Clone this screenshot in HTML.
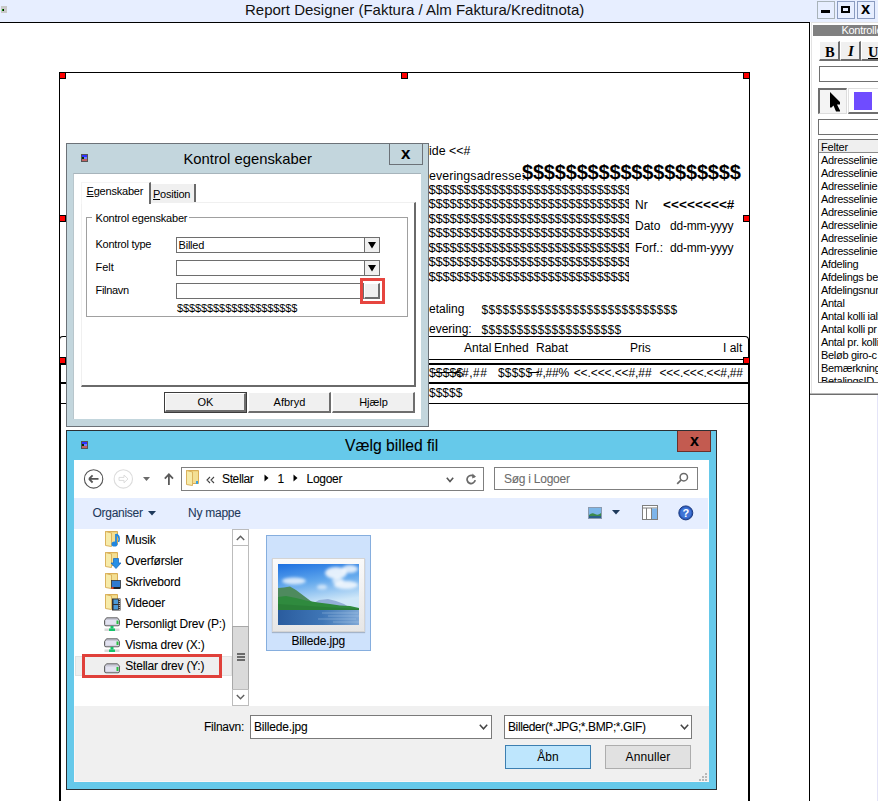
<!DOCTYPE html><html><head><meta charset="utf-8"><style>
html,body{margin:0;padding:0;width:878px;height:801px;overflow:hidden;background:#fff;position:relative;font-family:"Liberation Sans",sans-serif}
div,span,svg{position:absolute;box-sizing:border-box}
.t{-webkit-text-stroke:0.08px currentColor}
.r{position:relative}
</style></head><body>
<div style="left:0px;top:0px;width:878px;height:22px;background:#e7eeff"></div>
<div style="left:0px;top:22px;width:810px;height:1px;background:#000"></div>
<div style="left:809px;top:22px;width:1px;height:779px;background:#000"></div>
<div style="left:1px;top:6px;width:6px;height:7px;background:#c8c8c8"></div>
<div style="left:2px;top:9px;width:1px;height:2px;background:#0a0"></div>
<div style="left:3px;top:9px;width:1px;height:2px;background:#000"></div>
<div style="left:245px;top:2.40px;font-family:'Liberation Sans',sans-serif;font-size:15px;line-height:15px;white-space:pre;color:#111">Report Designer (Faktura / Alm Faktura/Kreditnota)</div>
<div style="left:817px;top:1px;width:18px;height:18px;background:#e7eeff;border:1px solid #a9b3b9"></div>
<div style="left:837px;top:1px;width:18px;height:18px;background:#e7eeff;border:1px solid #8a9bc0"></div>
<div style="left:857px;top:1px;width:18px;height:18px;background:#e7eeff;border:1px solid #8a9bc0"></div>
<div style="left:821px;top:10px;width:9px;height:3px;background:#000"></div>
<div style="left:841px;top:6px;width:9px;height:7px;border:2px solid #000;border-top-width:2px"></div>
<div style="left:861px;top:0.03px;font-family:'Liberation Sans',sans-serif;font-size:16.5px;line-height:16.5px;white-space:pre;font-weight:bold;color:#000">x</div>
<div style="left:810px;top:23px;width:68px;height:371px;background:#fff"></div>
<div style="left:811px;top:22px;width:67px;height:1px;background:#e3e3e3"></div>
<div style="left:811px;top:22px;width:1px;height:372px;background:#e3e3e3"></div>
<div style="left:813px;top:25px;width:65px;height:11px;background:#808080"></div>
<div style="left:841.5px;top:25.49px;font-family:'Liberation Sans',sans-serif;font-size:11px;line-height:11px;white-space:pre;color:#fff;letter-spacing:-0.3px">Kontrolle</div>
<div style="left:810px;top:393px;width:68px;height:1px;background:#b8b8b8"></div>
<div style="left:810px;top:394px;width:68px;height:1px;background:#6e6e6e"></div>
<div style="left:819px;top:41px;width:21px;height:20px;background:#f0f0f0;border-top:1px solid #fff;border-left:1px solid #fff;border-right:2px solid #6e6e6e;border-bottom:2px solid #6e6e6e"></div>
<div style="left:825px;top:44.53px;font-family:'Liberation Serif',sans-serif;font-size:14.5px;line-height:14.5px;white-space:pre;font-weight:bold;color:#000">B</div>
<div style="left:840px;top:41px;width:21px;height:20px;background:#f0f0f0;border-top:1px solid #fff;border-left:1px solid #fff;border-right:2px solid #6e6e6e;border-bottom:2px solid #6e6e6e"></div>
<div style="left:848px;top:44.10px;font-family:'Liberation Serif',sans-serif;font-size:15px;line-height:15px;white-space:pre;font-weight:bold;font-style:italic;color:#000">I</div>
<div style="left:861px;top:41px;width:21px;height:20px;background:#f0f0f0;border-top:1px solid #fff;border-left:1px solid #fff;border-right:2px solid #6e6e6e;border-bottom:2px solid #6e6e6e"></div>
<div style="left:868px;top:44.53px;font-family:'Liberation Serif',sans-serif;font-size:14.5px;line-height:14.5px;white-space:pre;font-weight:bold;text-decoration:underline;color:#000">U</div>
<div style="left:819px;top:66px;width:59px;height:16px;background:#fff;border:1px solid #707070;border-right:none"></div>
<div style="left:818px;top:88px;width:29px;height:26px;background:#f4f4f4;border-top:2px solid #6e6e6e;border-left:2px solid #6e6e6e;border-right:1px solid #ddd;border-bottom:1px solid #ddd"></div>
<svg style="left:829px;top:91px" width="13" height="22" viewBox="0 0 13 22"><path d="M1 1 L11 11 L11 13.5 L8 13.5 L11 19.5 L11 20.5 L7 20.5 L4.5 14.5 L2.5 16.5 L1 16.5 Z" fill="#000"/></svg>
<div style="left:848px;top:88px;width:30px;height:26px;background:#fff;border-top:1px solid #e0e0e0;border-left:1px solid #e0e0e0;border-bottom:2px solid #6e6e6e"></div>
<div style="left:854px;top:92px;width:18px;height:18px;background:#6f4cff"></div>
<div style="left:818px;top:119px;width:60px;height:16px;background:#fff;border:1px solid #707070;border-right:none"></div>
<div style="left:818px;top:139px;width:60px;height:244px;background:#fff;border:1px solid #707070;border-right:none;overflow:hidden"></div>
<div style="left:819px;top:140px;width:59px;height:12px;background:#efefef"></div>
<div style="left:819px;top:152px;width:59px;height:1px;background:#8a8a8a"></div>
<div style="left:821px;top:142.19px;font-family:'Liberation Sans',sans-serif;font-size:11px;line-height:11px;white-space:pre;color:#000;letter-spacing:-0.2px">Felter</div>
<div style="left:819px;top:139px;width:59px;height:243px;overflow:hidden"><div style="left:2px;top:16.29px;font-size:11px;line-height:11px;letter-spacing:-0.3px;white-space:pre;color:#000">Adresselinie</div><div style="left:2px;top:29.29px;font-size:11px;line-height:11px;letter-spacing:-0.3px;white-space:pre;color:#000">Adresselinie</div><div style="left:2px;top:42.29px;font-size:11px;line-height:11px;letter-spacing:-0.3px;white-space:pre;color:#000">Adresselinie</div><div style="left:2px;top:55.29px;font-size:11px;line-height:11px;letter-spacing:-0.3px;white-space:pre;color:#000">Adresselinie</div><div style="left:2px;top:68.29px;font-size:11px;line-height:11px;letter-spacing:-0.3px;white-space:pre;color:#000">Adresselinie</div><div style="left:2px;top:81.29px;font-size:11px;line-height:11px;letter-spacing:-0.3px;white-space:pre;color:#000">Adresselinie</div><div style="left:2px;top:94.29px;font-size:11px;line-height:11px;letter-spacing:-0.3px;white-space:pre;color:#000">Adresselinie</div><div style="left:2px;top:107.29px;font-size:11px;line-height:11px;letter-spacing:-0.3px;white-space:pre;color:#000">Adresselinie</div><div style="left:2px;top:120.29px;font-size:11px;line-height:11px;letter-spacing:-0.3px;white-space:pre;color:#000">Afdeling</div><div style="left:2px;top:133.29px;font-size:11px;line-height:11px;letter-spacing:-0.3px;white-space:pre;color:#000">Afdelings be</div><div style="left:2px;top:146.29px;font-size:11px;line-height:11px;letter-spacing:-0.3px;white-space:pre;color:#000">Afdelingsnummer</div><div style="left:2px;top:159.29px;font-size:11px;line-height:11px;letter-spacing:-0.3px;white-space:pre;color:#000">Antal</div><div style="left:2px;top:172.29px;font-size:11px;line-height:11px;letter-spacing:-0.3px;white-space:pre;color:#000">Antal kolli ialt</div><div style="left:2px;top:185.29px;font-size:11px;line-height:11px;letter-spacing:-0.3px;white-space:pre;color:#000">Antal kolli pr</div><div style="left:2px;top:198.29px;font-size:11px;line-height:11px;letter-spacing:-0.3px;white-space:pre;color:#000">Antal pr. kolli</div><div style="left:2px;top:211.29px;font-size:11px;line-height:11px;letter-spacing:-0.3px;white-space:pre;color:#000">Beløb giro-c</div><div style="left:2px;top:224.29px;font-size:11px;line-height:11px;letter-spacing:-0.3px;white-space:pre;color:#000">Bemærkning</div><div style="left:2px;top:237.29px;font-size:11px;line-height:11px;letter-spacing:-0.3px;white-space:pre;color:#000">BetalingsID</div></div>
<div style="left:877px;top:395px;width:1px;height:406px;background:#e4e4f8"></div>
<div style="left:59px;top:72px;width:691px;height:1px;background:#000"></div>
<div style="left:59px;top:72px;width:1px;height:729px;background:#000"></div>
<div style="left:749px;top:72px;width:1px;height:729px;background:#000"></div>
<div style="left:429px;top:144.60px;font-family:'Liberation Sans',sans-serif;font-size:12.4px;line-height:12.4px;white-space:pre;color:#000">ide &lt;&lt;#</div>
<div style="left:429px;top:169.90px;font-family:'Liberation Sans',sans-serif;font-size:12.4px;line-height:12.4px;white-space:pre;color:#000;letter-spacing:0.1px">everingsadresse:</div>
<div style="left:522px;top:162.17px;font-family:'Liberation Sans',sans-serif;font-size:20px;line-height:20px;white-space:pre;color:#000;font-weight:bold;letter-spacing:-0.19px">$$$$$$$$$$$$$$$$$$$$</div>
<div style="left:429px;top:183px;width:200px;height:14px;overflow:hidden"><div style="left:-0.5px;top:0;font-size:13px;line-height:13px;letter-spacing:-0.23px;white-space:pre;color:#000">$$$$$$$$$$$$$$$$$$$$$$$$$$$$$$</div></div>
<div style="left:429px;top:197px;width:200px;height:14px;overflow:hidden"><div style="left:-0.5px;top:0;font-size:13px;line-height:13px;letter-spacing:-0.23px;white-space:pre;color:#000">$$$$$$$$$$$$$$$$$$$$$$$$$$$$$$</div></div>
<div style="left:429px;top:212px;width:200px;height:14px;overflow:hidden"><div style="left:-0.5px;top:0;font-size:13px;line-height:13px;letter-spacing:-0.23px;white-space:pre;color:#000">$$$$$$$$$$$$$$$$$$$$$$$$$$$$$$</div></div>
<div style="left:429px;top:226px;width:200px;height:14px;overflow:hidden"><div style="left:-0.5px;top:0;font-size:13px;line-height:13px;letter-spacing:-0.23px;white-space:pre;color:#000">$$$$$$$$$$$$$$$$$$$$$$$$$$$$$$</div></div>
<div style="left:429px;top:241px;width:200px;height:14px;overflow:hidden"><div style="left:-0.5px;top:0;font-size:13px;line-height:13px;letter-spacing:-0.23px;white-space:pre;color:#000">$$$$$$$$$$$$$$$$$$$$$$$$$$$$$$</div></div>
<div style="left:429px;top:255px;width:200px;height:14px;overflow:hidden"><div style="left:-0.5px;top:0;font-size:13px;line-height:13px;letter-spacing:-0.23px;white-space:pre;color:#000">$$$$$$$$$$$$$$$$$$$$$$$$$$$$$$</div></div>
<div style="left:429px;top:270px;width:200px;height:14px;overflow:hidden"><div style="left:-0.5px;top:0;font-size:13px;line-height:13px;letter-spacing:-0.23px;white-space:pre;color:#000">$$$$$$$$$$$$$$$$$$$$$$$$$$$$$$</div></div>
<div style="left:635px;top:199.34px;font-family:'Liberation Sans',sans-serif;font-size:12px;line-height:12px;white-space:pre;color:#000">Nr</div>
<div style="left:663px;top:198.17px;font-family:'Liberation Sans',sans-serif;font-size:13.5px;line-height:13.5px;white-space:pre;color:#000;font-weight:bold;letter-spacing:0.1px">&lt;&lt;&lt;&lt;&lt;&lt;&lt;&lt;#</div>
<div style="left:635px;top:219.84px;font-family:'Liberation Sans',sans-serif;font-size:12px;line-height:12px;white-space:pre;color:#000">Dato</div>
<div style="left:670px;top:219.84px;font-family:'Liberation Sans',sans-serif;font-size:12px;line-height:12px;white-space:pre;color:#000;letter-spacing:-0.2px">dd-mm-yyyy</div>
<div style="left:635px;top:242.14px;font-family:'Liberation Sans',sans-serif;font-size:12px;line-height:12px;white-space:pre;color:#000">Forf.:</div>
<div style="left:670px;top:242.14px;font-family:'Liberation Sans',sans-serif;font-size:12px;line-height:12px;white-space:pre;color:#000;letter-spacing:-0.2px">dd-mm-yyyy</div>
<div style="left:429px;top:303.44px;font-family:'Liberation Sans',sans-serif;font-size:12px;line-height:12px;white-space:pre;color:#000">etaling</div>
<div style="left:481.5px;top:303.64px;font-family:'Liberation Sans',sans-serif;font-size:12px;line-height:12px;white-space:pre;color:#000;letter-spacing:0.33px">$$$$$$$$$$$$$$$$$$$$$$$$$$$$</div>
<div style="left:429px;top:323.44px;font-family:'Liberation Sans',sans-serif;font-size:12px;line-height:12px;white-space:pre;color:#000">evering:</div>
<div style="left:481.5px;top:323.64px;font-family:'Liberation Sans',sans-serif;font-size:12px;line-height:12px;white-space:pre;color:#000;letter-spacing:0.33px">$$$$$$$$$$$$$$$$$$$$</div>
<div style="left:59px;top:336px;width:690px;height:24px;border:1px solid #000;border-radius:4px 4px 0 0;border-bottom:none"></div>
<div style="left:59px;top:359px;width:691px;height:1px;background:#000"></div>
<div style="left:464px;top:341.84px;font-family:'Liberation Sans',sans-serif;font-size:12px;line-height:12px;white-space:pre;color:#000">Antal</div>
<div style="left:494px;top:341.84px;font-family:'Liberation Sans',sans-serif;font-size:12px;line-height:12px;white-space:pre;color:#000">Enhed</div>
<div style="left:536px;top:341.84px;font-family:'Liberation Sans',sans-serif;font-size:12px;line-height:12px;white-space:pre;color:#000">Rabat</div>
<div style="left:630px;top:342.14px;font-family:'Liberation Sans',sans-serif;font-size:12px;line-height:12px;white-space:pre;color:#000">Pris</div>
<div style="left:723px;top:342.14px;font-family:'Liberation Sans',sans-serif;font-size:12px;line-height:12px;white-space:pre;color:#000">I alt</div>
<div style="left:59px;top:363px;width:691px;height:2px;background:#000"></div>
<div style="left:429px;top:367.14px;font-family:'Liberation Sans',sans-serif;font-size:12px;line-height:12px;white-space:pre;color:#000;letter-spacing:0.2px">$$$$$</div>
<div style="left:434px;top:372px;width:25px;height:1px;background:#000"></div>
<div style="left:454px;top:367.14px;font-family:'Liberation Sans',sans-serif;font-size:12px;line-height:12px;white-space:pre;color:#000">&lt;</div>
<div style="left:462px;top:367.14px;font-family:'Liberation Sans',sans-serif;font-size:12px;line-height:12px;white-space:pre;color:#000;letter-spacing:0.5px">#,##</div>
<div style="left:498px;top:367.14px;font-family:'Liberation Sans',sans-serif;font-size:12px;line-height:12px;white-space:pre;color:#000;letter-spacing:0.2px">$$$$$</div>
<div style="left:528px;top:372px;width:11px;height:1px;background:#000"></div>
<div style="left:536px;top:367.14px;font-family:'Liberation Sans',sans-serif;font-size:12px;line-height:12px;white-space:pre;color:#000;letter-spacing:-0.2px">#,##%</div>
<div style="left:573.7px;top:367.14px;font-family:'Liberation Sans',sans-serif;font-size:12px;line-height:12px;white-space:pre;color:#000;letter-spacing:-0.1px">&lt;&lt;.&lt;&lt;&lt;.&lt;&lt;#,##</div>
<div style="left:659.5px;top:367.14px;font-family:'Liberation Sans',sans-serif;font-size:12px;line-height:12px;white-space:pre;color:#000;letter-spacing:-0.2px">&lt;&lt;&lt;.&lt;&lt;&lt;.&lt;&lt;#,##</div>
<div style="left:59px;top:382px;width:691px;height:2px;background:#000"></div>
<div style="left:429px;top:387.14px;font-family:'Liberation Sans',sans-serif;font-size:12px;line-height:12px;white-space:pre;color:#000">$$$$$</div>
<div style="left:59px;top:403px;width:691px;height:1px;background:#000"></div>
<div style="left:60px;top:364px;width:1px;height:437px;background:#000"></div>
<div style="left:748px;top:339px;width:1px;height:462px;background:#000"></div>
<div style="left:59px;top:72px;width:7px;height:7px;background:#ff0000;border:1px solid #000;box-sizing:border-box"></div>
<div style="left:401px;top:72px;width:7px;height:7px;background:#ff0000;border:1px solid #000;box-sizing:border-box"></div>
<div style="left:743px;top:72px;width:7px;height:7px;background:#ff0000;border:1px solid #000;box-sizing:border-box"></div>
<div style="left:59px;top:215px;width:7px;height:7px;background:#ff0000;border:1px solid #000;box-sizing:border-box"></div>
<div style="left:743px;top:215px;width:7px;height:7px;background:#ff0000;border:1px solid #000;box-sizing:border-box"></div>
<div style="left:59px;top:357px;width:7px;height:7px;background:#ff0000;border:1px solid #000;box-sizing:border-box"></div>
<div style="left:743px;top:357px;width:7px;height:7px;background:#ff0000;border:1px solid #000;box-sizing:border-box"></div>
<div style="left:66px;top:143px;width:363px;height:284px;background:#c3d6dd;border:1px solid #6c7278"></div>
<div style="left:81px;top:154px;width:7px;height:8px;background:#c06060;border:1px solid #555"></div>
<div style="left:82px;top:155px;width:5px;height:2px;background:#3030ff"></div>
<div style="left:82px;top:157px;width:2px;height:2px;background:#003300"></div>
<div style="left:84px;top:157px;width:3px;height:2px;background:#7080ff"></div>
<div style="left:183.5px;top:151.87px;font-family:'Liberation Sans',sans-serif;font-size:14.8px;line-height:14.8px;white-space:pre;color:#000">Kontrol egenskaber</div>
<div style="left:389px;top:143px;width:34px;height:22px;background:#c3d6dd;border:1px solid #6c7278"></div>
<div style="left:401px;top:144.71px;font-family:'Liberation Sans',sans-serif;font-size:17px;line-height:17px;white-space:pre;font-weight:bold;color:#000">x</div>
<div style="left:73px;top:173px;width:348px;height:246px;background:#fff;border-top:1px solid #a7b4bb;border-left:1px solid #b8c6cc"></div>
<div style="left:81px;top:202px;width:335px;height:185px;border-left:1px solid #f0f0f0;border-top:1px solid #f0f0f0;border-right:2px solid #6a6a6a;border-bottom:2px solid #6a6a6a"></div>
<div style="left:151px;top:184px;width:45px;height:18px;background:#f0f0f0;border-right:2px solid #6a6a6a"></div>
<div style="left:81px;top:182px;width:70px;height:22px;background:#fff;border-left:1px solid #f4f4f4;border-top:1px solid #f4f4f4;border-right:2px solid #6a6a6a"></div>
<div style="left:86.5px;top:186.49px;font-family:'Liberation Sans',sans-serif;font-size:11px;line-height:11px;white-space:pre;color:#000;letter-spacing:-0.2px"><u>E</u>genskaber</div>
<div style="left:153px;top:188.59px;font-family:'Liberation Sans',sans-serif;font-size:11px;line-height:11px;white-space:pre;color:#000;letter-spacing:-0.25px"><u>P</u>osition</div>
<div style="left:86px;top:217px;width:322px;height:100px;border:1px solid #a0a0a0"></div>
<div style="left:92px;top:212px;width:97px;height:13px;background:#fff"></div>
<div style="left:95.5px;top:213.49px;font-family:'Liberation Sans',sans-serif;font-size:11px;line-height:11px;white-space:pre;color:#000;letter-spacing:-0.2px">Kontrol egenskaber</div>
<div style="left:95.5px;top:239.49px;font-family:'Liberation Sans',sans-serif;font-size:11px;line-height:11px;white-space:pre;color:#000;letter-spacing:-0.25px">Kontrol type</div>
<div style="left:95.5px;top:262.49px;font-family:'Liberation Sans',sans-serif;font-size:11px;line-height:11px;white-space:pre;color:#000">Felt</div>
<div style="left:95.5px;top:285.09px;font-family:'Liberation Sans',sans-serif;font-size:11px;line-height:11px;white-space:pre;color:#000;letter-spacing:-0.3px">Filnavn</div>
<div style="left:176px;top:237px;width:204px;height:16px;background:#fff;border:1px solid #6e6e6e"></div>
<div style="left:364px;top:237px;width:16px;height:16px;background:#f0f0f0;border:1px solid #6e6e6e"></div>
<svg style="left:368px;top:242px" width="8" height="7" viewBox="0 0 8 7"><path d="M0 0 H8 L4 6.5 Z" fill="#000"/></svg>
<div style="left:178.5px;top:240.29px;font-family:'Liberation Sans',sans-serif;font-size:11px;line-height:11px;white-space:pre;color:#000;letter-spacing:-0.2px">Billed</div>
<div style="left:176px;top:260px;width:204px;height:16px;background:#fff;border:1px solid #6e6e6e"></div>
<div style="left:364px;top:260px;width:16px;height:16px;background:#f0f0f0;border:1px solid #6e6e6e"></div>
<svg style="left:368px;top:265px" width="8" height="7" viewBox="0 0 8 7"><path d="M0 0 H8 L4 6.5 Z" fill="#000"/></svg>
<div style="left:176px;top:283px;width:188px;height:16px;background:#fff;border:1px solid #6e6e6e"></div>
<div style="left:364px;top:283px;width:16px;height:16px;background:#f0f0f0;border-top:1px solid #fff;border-left:1px solid #fff;border-right:2px solid #6e6e6e;border-bottom:2px solid #6e6e6e"></div>
<div style="left:360px;top:278px;width:25px;height:26px;border:3px solid #e6453f"></div>
<div style="left:177px;top:303.49px;font-family:'Liberation Sans',sans-serif;font-size:11px;line-height:11px;white-space:pre;color:#000;letter-spacing:-0.1px">$$$$$$$$$$$$$$$$$$$$</div>
<div style="left:164px;top:392px;width:83px;height:21px;background:#f0f0f0;border:1px solid #3c3c3c"></div>
<div style="left:165px;top:393px;width:81px;height:19px;border-top:1px solid #fff;border-left:1px solid #fff;border-right:2px solid #6e6e6e;border-bottom:2px solid #6e6e6e"></div>
<div style="left:164px;top:397.09px;width:83px;text-align:center;font-size:11px;line-height:11px;color:#000">OK</div>
<div style="left:248px;top:392px;width:83px;height:21px;background:#f0f0f0;border-top:1px solid #fff;border-left:1px solid #fff;border-right:2px solid #6e6e6e;border-bottom:2px solid #6e6e6e"></div>
<div style="left:248px;top:397.09px;width:83px;text-align:center;font-size:11px;line-height:11px;color:#000">Afbryd</div>
<div style="left:332px;top:392px;width:83px;height:21px;background:#f0f0f0;border-top:1px solid #fff;border-left:1px solid #fff;border-right:2px solid #6e6e6e;border-bottom:2px solid #6e6e6e"></div>
<div style="left:332px;top:397.09px;width:83px;text-align:center;font-size:11px;line-height:11px;color:#000">Hjælp</div>
<div style="left:66px;top:430px;width:651px;height:360px;background:#66c9ea;border:1px solid #2b2f33"></div>
<div style="left:81px;top:441px;width:7px;height:8px;background:#c06060;border:1px solid #555"></div>
<div style="left:82px;top:442px;width:5px;height:2px;background:#3030ff"></div>
<div style="left:82px;top:444px;width:2px;height:2px;background:#003300"></div>
<div style="left:84px;top:444px;width:3px;height:2px;background:#7080ff"></div>
<div class="t" style="left:345px;top:438.01px;font-family:'Liberation Sans',sans-serif;font-size:15.7px;line-height:15.7px;white-space:pre;color:#000">Vælg billed fil</div>
<div style="left:677px;top:431px;width:34px;height:21px;background:#c35b50;border:1px solid #6b2f2a;border-top:none"></div>
<div class="t" style="left:690px;top:432.56px;font-family:'Liberation Sans',sans-serif;font-size:16px;line-height:16px;white-space:pre;font-weight:bold;color:#000">x</div>
<div style="left:74px;top:460px;width:635px;height:322px;background:#fff"></div>
<svg style="left:83px;top:468px" width="22" height="22" viewBox="0 0 22 22"><circle cx="10.6" cy="10.9" r="9.2" fill="none" stroke="#555" stroke-width="1.1"/><path d="M6 10.9 H15.5 M6 10.9 L9.6 7.3 M6 10.9 L9.6 14.5" stroke="#555" stroke-width="1.8" fill="none"/></svg>
<svg style="left:113px;top:468px" width="22" height="22" viewBox="0 0 22 22"><circle cx="10.3" cy="10.9" r="9.2" fill="none" stroke="#dcdcdc" stroke-width="1.1"/><path d="M6 9.4 H11 V7 L15 10.9 L11 14.8 V12.4 H6 Z" stroke="#dcdcdc" stroke-width="1" fill="none"/></svg>
<svg style="left:143px;top:477px" width="8" height="5" viewBox="0 0 8 5"><path d="M0 0 H7 L3.5 4 Z" fill="#6a6a6a"/></svg>
<svg style="left:164px;top:473px" width="10" height="12" viewBox="0 0 10 12"><path d="M4.9 1.5 V12 M0.8 5.6 L4.9 1.3 L9 5.6" stroke="#5a5a5a" stroke-width="1.8" fill="none"/></svg>
<div style="left:181px;top:467px;width:303px;height:24px;background:#fff;border:1px solid #7f7f7f"></div>
<svg style="left:185px;top:469px" width="17" height="18" viewBox="0 0 17 18"><path d="M1.5 1.5 H13.5 V14.5 H1.5 Z" fill="#ebcb6c" stroke="#d9ad55" stroke-width="1"/><path d="M7.5 2.5 H13 V14 H7.5 Z" fill="#f3df94"/><path d="M1.5 1.5 L7.5 3 V16.5 L1.5 15.5 Z" fill="#f7eba9" stroke="#dbb35e" stroke-width="1"/><path d="M12 12 V15" stroke="#3aa0e0" stroke-width="2"/></svg>
<svg style="left:206px;top:476px" width="9" height="8" viewBox="0 0 9 8"><path d="M4 1 L1 4 L4 7 M8 1 L5 4 L8 7" stroke="#444" stroke-width="1.1" fill="none"/></svg>
<div class="t" style="left:222px;top:472.64px;font-family:'Liberation Sans',sans-serif;font-size:12px;line-height:12px;white-space:pre;color:#000;letter-spacing:-0.37px">Stellar</div>
<svg style="left:264px;top:474px" width="5" height="8" viewBox="0 0 5 8"><path d="M0.5 0.5 L4.5 4 L0.5 7.5 Z" fill="#000"/></svg>
<div class="t" style="left:277.5px;top:472.64px;font-family:'Liberation Sans',sans-serif;font-size:12px;line-height:12px;white-space:pre;color:#000">1</div>
<svg style="left:293px;top:474px" width="5" height="8" viewBox="0 0 5 8"><path d="M0.5 0.5 L4.5 4 L0.5 7.5 Z" fill="#000"/></svg>
<div class="t" style="left:306.5px;top:472.64px;font-family:'Liberation Sans',sans-serif;font-size:12px;line-height:12px;white-space:pre;color:#000;letter-spacing:-0.27px">Logoer</div>
<svg style="left:446px;top:477px" width="8" height="6" viewBox="0 0 8 6"><path d="M0.8 0.8 L4 4.5 L7.2 0.8" stroke="#555" stroke-width="1.6" fill="none"/></svg>
<svg style="left:466px;top:473px" width="11" height="12" viewBox="0 0 11 12"><path d="M8.6 4.2 A4.1 4.1 0 1 0 9.2 7.2" stroke="#6a6a6a" stroke-width="1.7" fill="none"/><path d="M6.4 0.6 L10 3.8 L6.2 5.4 Z" fill="#6a6a6a"/></svg>
<div style="left:494px;top:467px;width:204px;height:23px;background:#fff;border:1px solid #7f7f7f"></div>
<div class="t" style="left:504px;top:472.64px;font-family:'Liberation Sans',sans-serif;font-size:12px;line-height:12px;white-space:pre;color:#6d6d6d;letter-spacing:-0.25px">Søg i Logoer</div>
<svg style="left:676px;top:472px" width="13" height="13" viewBox="0 0 13 13"><circle cx="7.8" cy="5.2" r="3.7" fill="none" stroke="#6a6a6a" stroke-width="1.5"/><path d="M5.2 7.8 L1.2 11.8" stroke="#6a6a6a" stroke-width="1.8"/></svg>
<div style="left:74px;top:498px;width:634px;height:31px;background:#e6eeff"></div>
<div class="t" style="left:92.5px;top:506.84px;font-family:'Liberation Sans',sans-serif;font-size:12px;line-height:12px;white-space:pre;color:#1e395b;letter-spacing:-0.28px">Organiser</div>
<svg style="left:148px;top:511px" width="8" height="5" viewBox="0 0 8 5"><path d="M0 0 H8 L4 4.5 Z" fill="#1e395b"/></svg>
<div class="t" style="left:188px;top:506.84px;font-family:'Liberation Sans',sans-serif;font-size:12px;line-height:12px;white-space:pre;color:#1e395b;letter-spacing:-0.25px">Ny mappe</div>
<div style="left:588px;top:507px;width:14px;height:12px;background:#fff;border:1px solid #8a9ab0"></div>
<svg style="left:589px;top:508px" width="12" height="10" viewBox="0 0 12 10"><rect width="12" height="10" fill="#7cb6e8"/><path d="M0 7 Q3 4 6 6 T12 5 V10 H0 Z" fill="#3c8a4a"/><rect y="8" width="12" height="2" fill="#2a5f8a"/></svg>
<svg style="left:612px;top:510px" width="8" height="5" viewBox="0 0 8 5"><path d="M0 0 H8 L4 4.5 Z" fill="#1e395b"/></svg>
<svg style="left:642px;top:505px" width="16" height="15" viewBox="0 0 16 15"><rect x="0.5" y="0.5" width="15" height="14" fill="#fff" stroke="#7f7f7f"/><path d="M0.5 3 H15.5" stroke="#7f7f7f"/><path d="M4.5 3 V14.5" stroke="#7f7f7f"/><rect x="9.5" y="3.5" width="5.5" height="10.5" fill="#7db4ea"/><path d="M9.5 3 V14.5" stroke="#7f7f7f"/></svg>
<svg style="left:678px;top:505px" width="16" height="16" viewBox="0 0 16 16"><circle cx="7.8" cy="7.9" r="7" fill="#2b57b7" stroke="#1a3a80" stroke-width="1"/><circle cx="7.8" cy="7.9" r="5.6" fill="#3f74d6"/><text x="7.8" y="11.8" font-family="Liberation Sans" font-weight="bold" font-size="11" text-anchor="middle" fill="#fff">?</text></svg>
<svg style="left:104px;top:530px" width="17" height="18" viewBox="0 0 17 18"><path d="M1.5 1.5 H13.5 V14.5 H1.5 Z" fill="#ebcb6c" stroke="#d9ad55" stroke-width="1"/><path d="M7.5 2.5 H13 V14 H7.5 Z" fill="#f3df94"/><path d="M1.5 1.5 L7.5 3 V16.5 L1.5 15.5 Z" fill="#f7eba9" stroke="#dbb35e" stroke-width="1"/><path d="M12 4 V13.5" stroke="#1f86df" stroke-width="1.8"/><ellipse cx="10.5" cy="14" rx="3" ry="2.6" fill="#1f86df"/><path d="M12.5 4 Q16.5 7 14.5 12" stroke="#1f86df" stroke-width="1.6" fill="none"/></svg>
<div class="t" style="left:125.3px;top:533.74px;font-family:'Liberation Sans',sans-serif;font-size:12px;line-height:12px;white-space:pre;color:#000;letter-spacing:-0.22px;">Musik</div>
<svg style="left:104px;top:551px" width="17" height="18" viewBox="0 0 17 18"><path d="M1.5 1.5 H13.5 V14.5 H1.5 Z" fill="#ebcb6c" stroke="#d9ad55" stroke-width="1"/><path d="M7.5 2.5 H13 V14 H7.5 Z" fill="#f3df94"/><path d="M1.5 1.5 L7.5 3 V16.5 L1.5 15.5 Z" fill="#f7eba9" stroke="#dbb35e" stroke-width="1"/><path d="M9.5 7.5 H14.5 V12 H17 L12 17.5 L7 12 H9.5 Z" fill="#2790e6" stroke="#1a6cc0" stroke-width="0.8"/></svg>
<div class="t" style="left:125.3px;top:554.74px;font-family:'Liberation Sans',sans-serif;font-size:12px;line-height:12px;white-space:pre;color:#000;letter-spacing:-0.22px;">Overførsler</div>
<svg style="left:104px;top:572px" width="17" height="18" viewBox="0 0 17 18"><path d="M1.5 1.5 H13.5 V14.5 H1.5 Z" fill="#ebcb6c" stroke="#d9ad55" stroke-width="1"/><path d="M7.5 2.5 H13 V14 H7.5 Z" fill="#f3df94"/><path d="M1.5 1.5 L7.5 3 V16.5 L1.5 15.5 Z" fill="#f7eba9" stroke="#dbb35e" stroke-width="1"/><rect x="7.5" y="8.5" width="9" height="7" fill="#2f7ad0" stroke="#333" stroke-width="0.8"/><rect x="7.5" y="15" width="9" height="2" fill="#222"/><rect x="7.5" y="15" width="2" height="2" fill="#e04020"/></svg>
<div class="t" style="left:125.3px;top:575.74px;font-family:'Liberation Sans',sans-serif;font-size:12px;line-height:12px;white-space:pre;color:#000;letter-spacing:-0.22px;">Skrivebord</div>
<svg style="left:104px;top:593px" width="17" height="18" viewBox="0 0 17 18"><path d="M1.5 1.5 H13.5 V14.5 H1.5 Z" fill="#ebcb6c" stroke="#d9ad55" stroke-width="1"/><path d="M7.5 2.5 H13 V14 H7.5 Z" fill="#f3df94"/><path d="M1.5 1.5 L7.5 3 V16.5 L1.5 15.5 Z" fill="#f7eba9" stroke="#dbb35e" stroke-width="1"/><rect x="8" y="5.5" width="8.5" height="12" fill="#333"/><rect x="9.5" y="6.5" width="4.5" height="4.5" fill="#4a9ad8"/><rect x="9.5" y="12" width="4.5" height="4.5" fill="#4a9ad8"/><path d="M15.3 6 V17" stroke="#fff" stroke-width="0.8" stroke-dasharray="1 1"/></svg>
<div class="t" style="left:125.3px;top:596.74px;font-family:'Liberation Sans',sans-serif;font-size:12px;line-height:12px;white-space:pre;color:#000;letter-spacing:-0.22px;">Videoer</div>
<svg style="left:104px;top:617px" width="17" height="15" viewBox="0 0 17 15"><path d="M2.5 0.8 H13.5 L15.5 3.5 V7.5 Q15.5 8.8 14 8.8 H2 Q0.5 8.8 0.5 7.5 V3.5 Z" fill="#c9c9d6" stroke="#555" stroke-width="0.9"/><rect x="2" y="3" width="12.5" height="4.5" fill="#e2e2f0"/><rect x="12.5" y="3.5" width="2" height="3.5" fill="#28c040"/><path d="M8 9 V12" stroke="#17c36a" stroke-width="3"/><rect x="0.5" y="11.5" width="15" height="2.5" fill="#d8d8d8"/><rect x="5" y="11.5" width="6" height="2.5" fill="#17c36a"/></svg>
<div class="t" style="left:125.3px;top:618.24px;font-family:'Liberation Sans',sans-serif;font-size:12px;line-height:12px;white-space:pre;color:#000;letter-spacing:-0.22px;">Personligt Drev (P:)</div>
<svg style="left:104px;top:638px" width="17" height="15" viewBox="0 0 17 15"><path d="M2.5 0.8 H13.5 L15.5 3.5 V7.5 Q15.5 8.8 14 8.8 H2 Q0.5 8.8 0.5 7.5 V3.5 Z" fill="#c9c9d6" stroke="#555" stroke-width="0.9"/><rect x="2" y="3" width="12.5" height="4.5" fill="#e2e2f0"/><rect x="12.5" y="3.5" width="2" height="3.5" fill="#28c040"/><path d="M8 9 V12" stroke="#17c36a" stroke-width="3"/><rect x="0.5" y="11.5" width="15" height="2.5" fill="#d8d8d8"/><rect x="5" y="11.5" width="6" height="2.5" fill="#17c36a"/></svg>
<div class="t" style="left:125.3px;top:638.74px;font-family:'Liberation Sans',sans-serif;font-size:12px;line-height:12px;white-space:pre;color:#000;letter-spacing:-0.22px;">Visma drev (X:)</div>
<div style="left:75px;top:656px;width:157px;height:20px;background:#efefef;border:1px solid #e2e2e2"></div>
<svg style="left:104px;top:663px" width="17" height="11" viewBox="0 0 17 11"><path d="M2.5 0.8 H13.5 L15.5 3.2 V8 Q15.5 9.8 14 9.8 H2 Q0.5 9.8 0.5 8 V3.2 Z" fill="#c9c9d6" stroke="#555" stroke-width="0.9"/><rect x="2" y="3.5" width="12.5" height="5" fill="#e2e2f0"/><rect x="12.5" y="4" width="2" height="4" fill="#28c040"/></svg>
<div class="t" style="left:125.3px;top:659.74px;font-family:'Liberation Sans',sans-serif;font-size:12px;line-height:12px;white-space:pre;color:#000;letter-spacing:-0.22px;">Stellar drev (Y:)</div>
<div style="left:82px;top:654px;width:140px;height:24px;border:3px solid #e0403a"></div>
<div style="left:232px;top:529px;width:17px;height:177px;background:#fff;border-left:1px solid #bcbcbc;border-right:1px solid #bcbcbc"></div>
<div style="left:232px;top:529px;width:17px;height:17px;border:1px solid #bcbcbc"></div>
<svg style="left:236px;top:535px" width="9" height="6" viewBox="0 0 9 6"><path d="M0.8 5 L4.5 1.2 L8.2 5" stroke="#606060" stroke-width="1.4" fill="none"/></svg>
<div style="left:232px;top:626px;width:17px;height:64px;background:#dadada;border:1px solid #a8a8a8"></div>
<div style="left:237px;top:653px;width:8px;height:2px;background:#6a6a6a"></div>
<div style="left:237px;top:656px;width:8px;height:2px;background:#6a6a6a"></div>
<div style="left:237px;top:659px;width:8px;height:2px;background:#6a6a6a"></div>
<div style="left:232px;top:689px;width:17px;height:17px;background:#fff;border:1px solid #bcbcbc"></div>
<svg style="left:236px;top:694px" width="9" height="6" viewBox="0 0 9 6"><path d="M0.8 1 L4.5 4.8 L8.2 1" stroke="#606060" stroke-width="1.4" fill="none"/></svg>
<div style="left:266px;top:535px;width:105px;height:116px;background:#cee2fc;border:1px solid #86aede"></div>
<div style="left:272px;top:558px;width:93px;height:74px;background:linear-gradient(#fafafa,#e6e6e6);border:1px solid #d4d4d4;box-shadow:0 1px 1px rgba(0,0,0,0.2)"></div>
<svg style="left:278px;top:564px" width="81" height="61" viewBox="0 0 81 61"><defs><linearGradient id="sky" x1="0" y1="0" x2="0.2" y2="1"><stop offset="0" stop-color="#1c6fe0"/><stop offset="0.35" stop-color="#5fa6ec"/><stop offset="0.72" stop-color="#cfe7f8"/></linearGradient><linearGradient id="sea" x1="0" y1="0" x2="1" y2="0"><stop offset="0" stop-color="#2a5c9e"/><stop offset="0.55" stop-color="#3f76b6"/><stop offset="1" stop-color="#7fa8d6"/></linearGradient><filter id="bl" x="-20%" y="-20%" width="140%" height="140%"><feGaussianBlur stdDeviation="1.6"/></filter></defs><rect width="81" height="61" fill="url(#sky)"/><g filter="url(#bl)" fill="#fff"><ellipse cx="16" cy="17" rx="12" ry="3.5" opacity="0.75"/><ellipse cx="58" cy="9" rx="11" ry="6" opacity="0.85"/><ellipse cx="72" cy="5" rx="8" ry="4" opacity="0.8"/><ellipse cx="68" cy="21" rx="12" ry="4" opacity="0.8"/><ellipse cx="44" cy="23" rx="5" ry="2.5" opacity="0.6"/><ellipse cx="60" cy="17" rx="6" ry="3" opacity="0.7"/></g><path d="M0 24 L6 23.5 L12 22.5 L18 26 L26 32 L34 38 L40 41 L0 41 Z" fill="#4e8a5e"/><path d="M34 40 L41 36 L50 35 L58 37 L66 40 L71 43 L34 43 Z" fill="#93afd8"/><path d="M0 33 L8 32 L18 34 L28 36.5 L40 38.5 L52 40 L62 41.5 L72 42 L81 44 V47 H0 Z" fill="#2f8a3e"/><path d="M0 40 L30 42 L81 45 V47 H0 Z" fill="#287a36" opacity="0.7"/><rect y="46" width="81" height="15" fill="url(#sea)"/><g stroke="#b8d4ee" stroke-width="0.7" opacity="0.55"><path d="M44 49 H80 M50 52 H81 M40 55 H78 M55 58 H81"/></g></svg>
<div class="t" style="left:291.5px;top:634.84px;font-family:'Liberation Sans',sans-serif;font-size:12px;line-height:12px;white-space:pre;color:#000;letter-spacing:-0.17px">Billede.jpg</div>
<div style="left:74px;top:706px;width:635px;height:76px;background:#f0f0f0;border-bottom:1px solid #fbf5f5;border-left:1px solid #fbf5f5"></div>
<div class="t" style="left:204px;top:720.74px;font-family:'Liberation Sans',sans-serif;font-size:12px;line-height:12px;white-space:pre;color:#000;letter-spacing:-0.25px">Filnavn:</div>
<div style="left:250px;top:715px;width:242px;height:24px;background:#fff;border:1px solid #7a7a7a"></div>
<div class="t" style="left:254px;top:721.24px;font-family:'Liberation Sans',sans-serif;font-size:12px;line-height:12px;white-space:pre;color:#000;letter-spacing:-0.17px">Billede.jpg</div>
<svg style="left:479px;top:724px" width="9" height="6" viewBox="0 0 9 6"><path d="M0.8 0.8 L4.5 4.8 L8.2 0.8" stroke="#444" stroke-width="1.5" fill="none"/></svg>
<div style="left:504px;top:715px;width:188px;height:24px;background:#fff;border:1px solid #7a7a7a"></div>
<div class="t" style="left:508px;top:721.04px;font-family:'Liberation Sans',sans-serif;font-size:12px;line-height:12px;white-space:pre;color:#000;letter-spacing:-0.39px">Billeder(*.JPG;*.BMP;*.GIF)</div>
<svg style="left:680px;top:724px" width="9" height="6" viewBox="0 0 9 6"><path d="M0.8 0.8 L4.5 4.8 L8.2 0.8" stroke="#444" stroke-width="1.5" fill="none"/></svg>
<div style="left:505px;top:745px;width:86px;height:24px;background:#bee6fd;border:1px solid #3c7fb1"></div>
<div style="left:505px;top:751.24px;width:86px;text-align:center;font-size:12px;line-height:12px;color:#000">Åbn</div>
<div style="left:605px;top:745px;width:86px;height:24px;background:#e1e1e1;border:1px solid #adadad"></div>
<div style="left:605px;top:751.24px;width:86px;text-align:center;font-size:12px;line-height:12px;color:#000;letter-spacing:0.1px">Annuller</div>
<div style="left:705px;top:773px;width:2px;height:2px;background:#b8b8b8"></div>
<div style="left:702px;top:776px;width:2px;height:2px;background:#b8b8b8"></div>
<div style="left:705px;top:776px;width:2px;height:2px;background:#b8b8b8"></div>
<div style="left:699px;top:779px;width:2px;height:2px;background:#b8b8b8"></div>
<div style="left:702px;top:779px;width:2px;height:2px;background:#b8b8b8"></div>
<div style="left:705px;top:779px;width:2px;height:2px;background:#b8b8b8"></div></body></html>
